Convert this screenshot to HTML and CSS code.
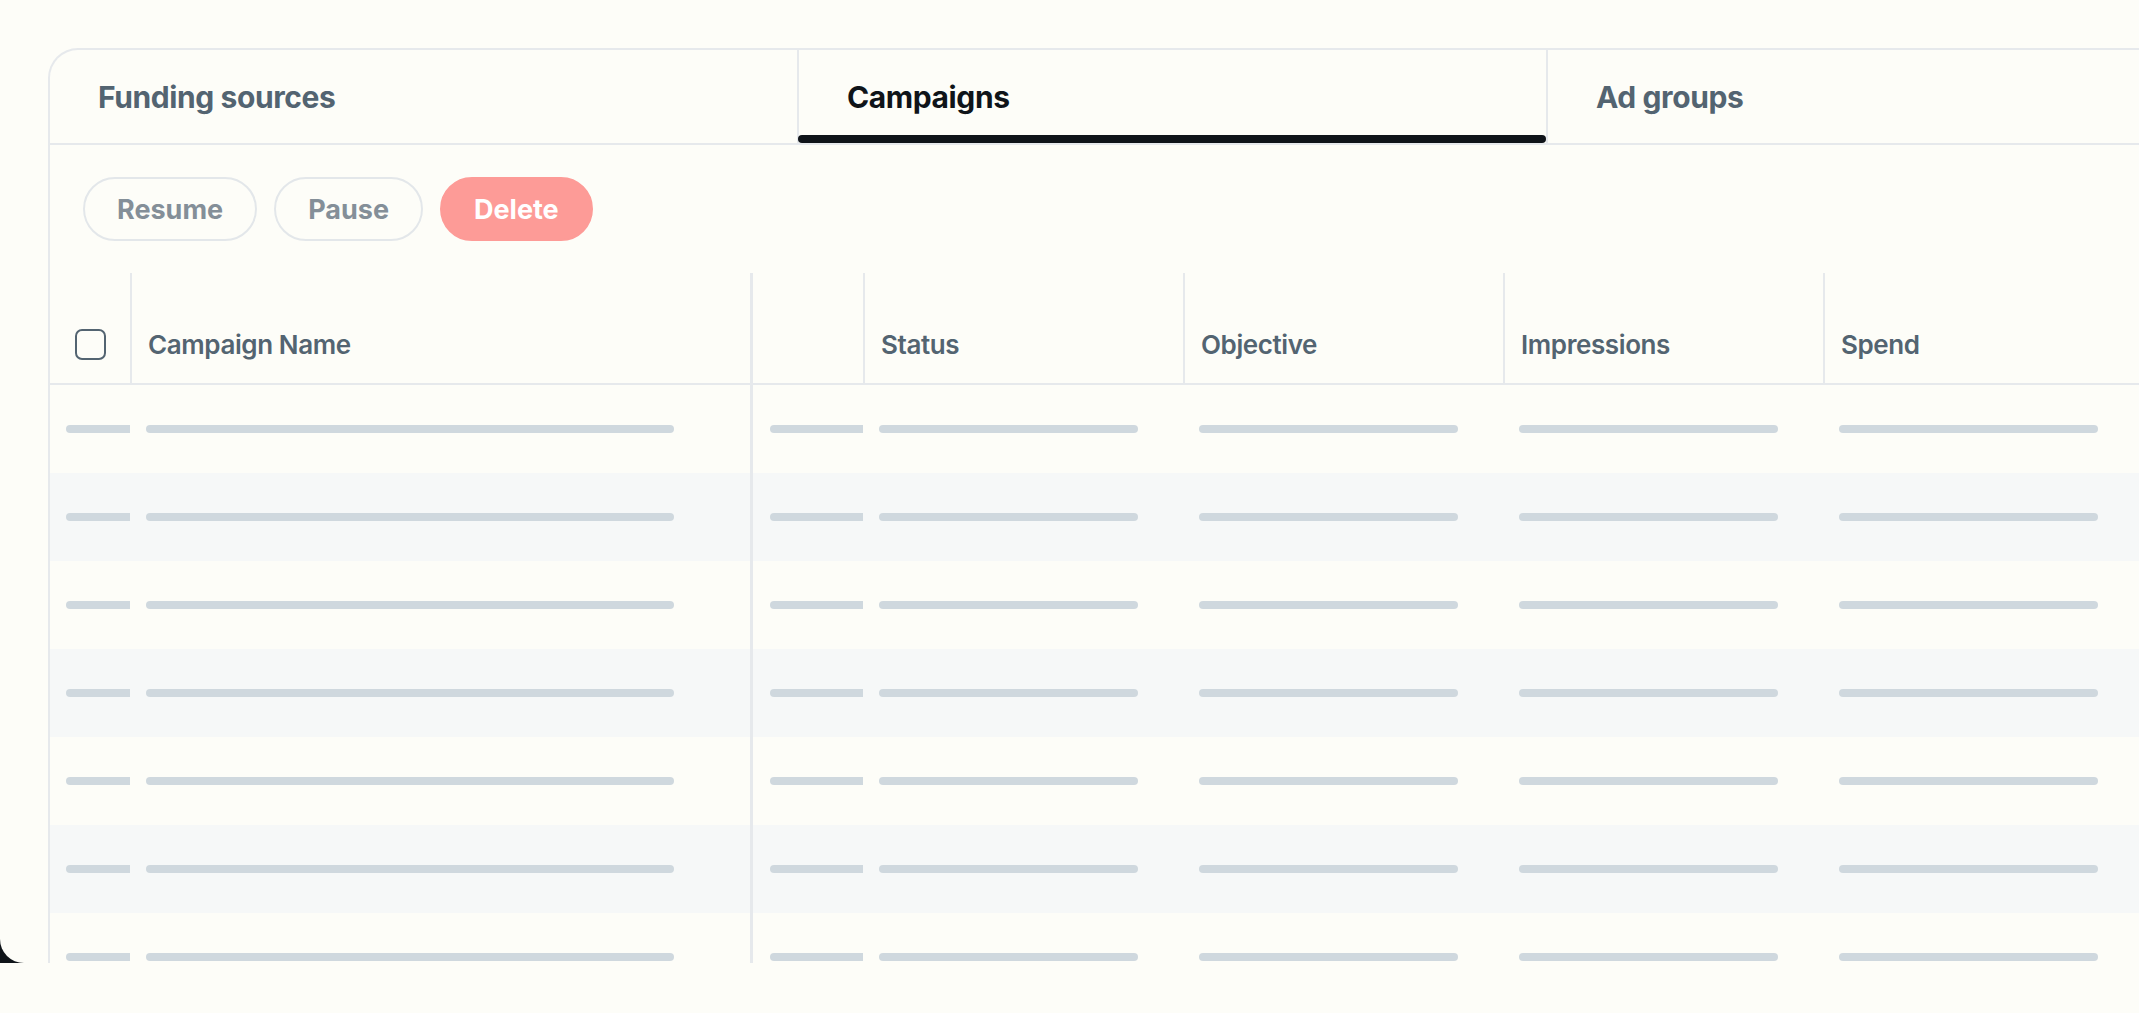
FILE: index.html
```html
<!DOCTYPE html>
<html lang="en">
<head>
    <meta charset="UTF-8">
    <meta name="viewport" content="width=device-width, initial-scale=1.0">
    <title>Campaigns</title>
    <link rel="stylesheet" href="styles.css">
</head>
<body>

    <div class="frame">
        <div class="panel">
            <div class="card">

                <div class="tabs">
                    <div class="tab">Funding sources</div>
                    <div class="tab active">Campaigns</div>
                    <div class="tab">Ad groups</div>
                </div>

                <div class="toolbar">
                    <button type="button" class="btn">Resume</button>
                    <button type="button" class="btn">Pause</button>
                    <button type="button" class="btn danger">Delete</button>
                </div>

                <div class="table">
                    <div class="row head">
                        <div class="cell check"><span class="checkbox"></span></div>
                        <div class="cell">Campaign Name</div>
                        <div class="cell pinned"></div>
                        <div class="cell">Status</div>
                        <div class="cell">Objective</div>
                        <div class="cell">Impressions</div>
                        <div class="cell">Spend</div>
                    </div>
                </div>

            </div>
        </div>
    </div>

    <script>
        // loading placeholders for the campaign rows
        var table = document.querySelector('.table');
        for (var i = 0; i < 8; i++) {
            var row = document.createElement('div');
            row.className = 'row';
            row.innerHTML =
                '<div class="cell check"><span class="bar"></span></div>' +
                '<div class="cell"><span class="bar wide"></span></div>' +
                '<div class="cell pinned"><span class="bar"></span></div>' +
                '<div class="cell"><span class="bar"></span></div>' +
                '<div class="cell"><span class="bar"></span></div>' +
                '<div class="cell"><span class="bar"></span></div>' +
                '<div class="cell"><span class="bar"></span></div>';
            table.appendChild(row);
        }
    </script>

</body>
</html>
```

FILE: styles.css
```css
* {
    box-sizing: border-box;
}

body {
    font-family: Inter, "Noto Sans", sans-serif;
    margin: 0;
    background-color: #fdfdf8;
    overflow: hidden;
}

.frame {
    height: 963px;
    background-color: #0f1419;
    overflow: hidden;
}

.panel {
    height: 100%;
    padding: 48px 0 0 48px;
    background-color: #fdfdf8;
    border-bottom-left-radius: 24px;
    overflow: hidden;
}

.card {
    width: 2249px;
    height: 100%;
    border: 2px solid #e6e9ec;
    border-bottom: none;
    border-top-left-radius: 30px;
    overflow: hidden;
}

.tabs {
    display: flex;
    border-bottom: 2px solid #e6e9ec;
}

.tab {
    position: relative;
    flex: 0 0 749px;
    height: 93px;
    padding-left: 48px;
    display: flex;
    align-items: center;
    font-size: 30px;
    line-height: 36px;
    font-weight: 700;
    letter-spacing: -0.4px;
    color: #536471;
    border-right: 2px solid #e6e9ec;
}

.tab.active {
    color: #0f1419;
}

.tab.active::after {
    content: "";
    position: absolute;
    left: -1px;
    right: 0;
    bottom: 0;
    height: 8px;
    border-radius: 4px;
    background-color: #0f1419;
}

.toolbar {
    display: flex;
    gap: 17px;
    padding: 32px 33px;
}

.btn {
    height: 64px;
    padding: 0 32px;
    border: 2px solid #e3e7ea;
    border-radius: 32px;
    background: transparent;
    font-family: Inter, "Noto Sans", sans-serif;
    font-size: 27px;
    font-weight: 700;
    color: #848f98;
}

.btn.danger {
    background-color: #fd9b97;
    border-color: #fd9b97;
    color: #ffffff;
}

.row {
    display: grid;
    grid-template-columns: 80px 620px 113px 320px 320px 320px 320px;
    height: 88px;
}

.row:nth-child(odd) {
    background-color: #f6f8f8;
}

.row.head {
    height: 112px;
    background-color: transparent;
    border-bottom: 2px solid #e6e9ec;
}

.cell {
    display: flex;
    align-items: center;
    padding: 0 16px;
    overflow: hidden;
    white-space: nowrap;
}

.head .cell {
    align-items: flex-end;
    padding-bottom: 23px;
    border-left: 2px solid #e6e9ec;
    font-size: 26px;
    line-height: 31px;
    font-weight: 600;
    letter-spacing: -0.4px;
    color: #536471;
}

.head .cell.check {
    border-left: none;
    justify-content: center;
    padding: 0 0 23px;
}

.cell.check {
    padding-left: 16px;
    padding-right: 0;
}

.cell.pinned,
.head .cell.pinned {
    border-left: 3px solid #e6e9ec;
    padding-left: 17px;
}

.checkbox {
    display: block;
    width: 31px;
    height: 31px;
    border: 2px solid #536471;
    border-radius: 7px;
}

.bar {
    flex: 0 0 259px;
    height: 8px;
    border-radius: 4px;
    background-color: #cfd8de;
}

.bar.wide {
    flex-basis: 528px;
}
```
